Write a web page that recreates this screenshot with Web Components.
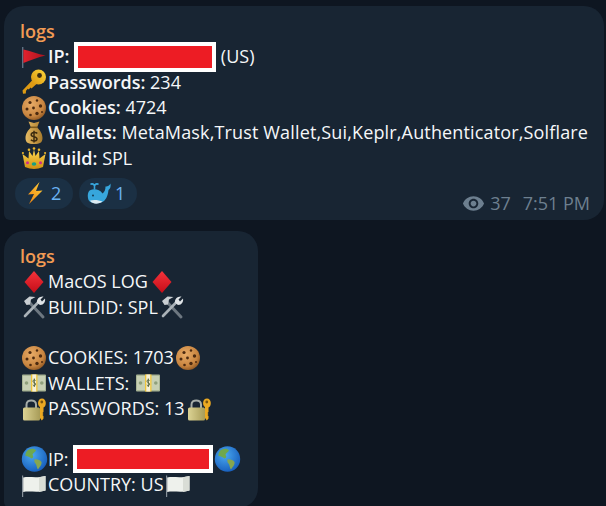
<!DOCTYPE html>
<html lang="en">
<head>
<meta charset="utf-8">
<title>logs</title>
<style>
html, body { height: 100%; overflow: hidden; }
body {
	margin: 0;
	background: #0e1621;
	color: #f5f7f9;
	font: 18px/25.33px "Open Sans", "Liberation Sans", sans-serif;
}
</style>
</head>
<body>

<chat-list>
	<tg-message>
		<msg-line title-line>logs</msg-line>
		<msg-line><x-emoji name="flag"></x-emoji><b>IP: </b><redact-box width="142" height="30"></redact-box> (US)</msg-line>
		<msg-line><x-emoji name="key"></x-emoji><b>Passwords:</b> 234</msg-line>
		<msg-line><x-emoji name="cookie"></x-emoji><b>Cookies:</b> 4724</msg-line>
		<msg-line><x-emoji name="bag"></x-emoji><b>Wallets:</b><span> MetaMask,Trust Wallet,Sui,Keplr,Authenticator,Solflare</span></msg-line>
		<msg-line><x-emoji name="crown"></x-emoji><b>Build:</b> SPL</msg-line>
		<msg-footer>
			<react-chip slot="chips" count="2"><x-emoji name="bolt"></x-emoji></react-chip>
			<react-chip slot="chips" count="1"><x-emoji name="whale"></x-emoji></react-chip>
			<msg-meta views="37" time="7:51 PM"></msg-meta>
		</msg-footer>
	</tg-message>

	<tg-message style="min-width: 222px">
		<msg-line title-line>logs</msg-line>
		<msg-line><x-emoji name="diamond"></x-emoji>MacOS LOG<x-emoji name="diamond"></x-emoji></msg-line>
		<msg-line><x-emoji name="tools"></x-emoji>BUILDID: SPL<x-emoji name="tools"></x-emoji></msg-line>
		<msg-line></msg-line>
		<msg-line><x-emoji name="cookie"></x-emoji>COOKIES: 1703<x-emoji name="cookie"></x-emoji></msg-line>
		<msg-line><x-emoji name="money"></x-emoji>WALLETS: <x-emoji name="money"></x-emoji></msg-line>
		<msg-line><x-emoji name="lock"></x-emoji>PASSWORDS: 13<x-emoji name="lock"></x-emoji></msg-line>
		<msg-line></msg-line>
		<msg-line><x-emoji name="globe"></x-emoji>IP: <redact-box width="140" height="28"></redact-box><x-emoji name="globe"></x-emoji></msg-line>
		<msg-line><x-emoji name="whiteflag"></x-emoji>COUNTRY: US<x-emoji name="whiteflag"></x-emoji></msg-line>
	</tg-message>
</chat-list>

<script>
// emoji are hand drawn, 24 box
const emoji = {
	flag: `<defs><linearGradient id="f" x1="0" x2="1"><stop offset="0" stop-color="#e3222e"/><stop offset="1" stop-color="#a8141e"/></linearGradient></defs>
		<rect x="0" y="2" width="1.400" height="21" fill="#5f7183"/>
		<path d="M1.400 4.500C8 6 16 9 23.500 10.500 16 12 8 15.500 1.400 18z" fill="url(#f)"/>`,
	key: `<defs><linearGradient id="k" x1="0" y1="1" x2="1" y2="0"><stop offset="0" stop-color="#d9950f"/><stop offset="1" stop-color="#ffd83b"/></linearGradient></defs>
		<path d="M.5 20.500 10.500 10 14.500 14 9.500 18.500 8.500 17.500 6.800 19.500 5.800 18.800 4 20.800 3.800 23.500 1 23.800z" fill="#dc9a14"/>
		<circle cx="16.500" cy="7" r="7.500" fill="url(#k)"/>
		<circle cx="17.500" cy="5.500" r="2.400" fill="#3b2c12"/>`,
	cookie: `<defs><radialGradient id="c" cx=".4" cy=".35" r=".7"><stop offset="0" stop-color="#e8ab66"/><stop offset=".7" stop-color="#c88540"/><stop offset="1" stop-color="#8d5520"/></radialGradient></defs>
		<circle cx="12" cy="12" r="12" fill="url(#c)"/>
		<g fill="#4c2a10"><circle cx="8" cy="6.500" r="1.600"/><circle cx="15" cy="4.500" r="1.200"/><circle cx="18.500" cy="10" r="1.700"/><circle cx="11.500" cy="12" r="1.400"/><circle cx="5" cy="13" r="1.500"/><circle cx="15" cy="17.500" r="1.700"/><circle cx="8.500" cy="19" r="1.300"/><circle cx="20" cy="16" r="1"/></g>`,
	bag: `<defs><linearGradient id="b" x1="0" x2="1"><stop offset="0" stop-color="#e6bb63"/><stop offset="1" stop-color="#a87b2c"/></linearGradient></defs>
		<path d="M6.500 .5 12 2 17.500 .5 15 6.500C18 9 20.500 13 20.500 17 20.500 21.500 18 23 12 23 6 23 3.500 21.500 3.500 17 3.500 13 6 9 9 6.500z" fill="url(#b)"/>
		<rect x="8.500" y="5.500" width="7" height="1.600" fill="#7c5a1c"/>
		<path d="M15.200 12.500C14.300 11 9.200 11 9.200 13.800 9.200 16.500 15 15 15 18 15 20.500 10.200 20.500 8.900 18.800M12 9.800V21.500" fill="none" stroke="#3d2c10" stroke-width="1.500"/>`,
	crown: `<defs><linearGradient id="r" x1="0" y1="0" x2="0" y2="1"><stop offset="0" stop-color="#ffd84f"/><stop offset="1" stop-color="#cf9012"/></linearGradient></defs>
		<path d="M3 21 .5 8 6.500 12.500 7 5 10.500 10 12 3.500 13.500 10 17 5 17.500 12.500 23.500 8 21 21C15 23.500 9 23.500 3 21z" fill="url(#r)"/>
		<circle cx="7" cy="3.800" r="1.300" fill="#e9b62c"/><circle cx="17" cy="3.800" r="1.300" fill="#e9b62c"/><circle cx="12" cy="2.500" r="1.300" fill="#e9b62c"/><circle cx=".9" cy="7" r="1.100" fill="#e9b62c"/><circle cx="23.100" cy="7" r="1.100" fill="#e9b62c"/>
		<ellipse cx="12" cy="18" rx="2.300" ry="1.800" fill="#16a082"/><circle cx="5.500" cy="16.800" r="1.500" fill="#cc2b8f"/><circle cx="18.500" cy="16.800" r="1.500" fill="#cc2b8f"/>`,
	bolt: `<defs><linearGradient id="l" x1="1" y1="0" x2="0" y2="1"><stop offset="0" stop-color="#ffd23c"/><stop offset="1" stop-color="#f0820f"/></linearGradient></defs>
		<path d="M16.500 1 5 13.500 11 13 6 23 19.500 9.500 13 10z" fill="url(#l)"/>`,
	whale: `<path d="M1.500 11C3 7.500 12 7 15.500 12.500 17.500 11 18.500 9 18.500 5.500 20 6 22.500 4.500 23.500 2.500 24 6 23 8 21.500 9 21 12.500 20.500 16 17.500 19.500 14 23 4 23.500 1.500 19 .5 16 .5 13 1.500 11z" fill="#37a6dc"/>
		<path d="M3 19.500C7 18.500 12 19 15.500 20.500 12 23.500 5 23.500 3 19.500z" fill="#dbeaf2"/>
		<path d="M7.500 8.500V4.500M7.500 4.500C6 2.500 4.500 2.500 3.500 3.500M7.500 4.500C9 2.500 10.500 2.500 11.500 3.500" fill="none" stroke="#37a6dc" stroke-width="1.600"/>
		<circle cx="6" cy="14.500" r="1" fill="#123a52"/>`,
	diamond: `<defs><linearGradient id="d" x1="0" y1="0" x2="0" y2="1"><stop offset="0" stop-color="#f5333b"/><stop offset="1" stop-color="#c40d18"/></linearGradient></defs>
		<path d="M12 1 21.500 12 12 23 2.500 12z" fill="url(#d)"/>`,
	tools: `<g fill="none" stroke-linecap="round">
			<path d="M7 7 21 22" stroke="#6d7780" stroke-width="3"/>
			<path d="M17.500 6 3 21" stroke="#aab2b8" stroke-width="2.600"/>
			<path d="M2 6 7.500 1.500 13.500 2 9 4.500 8 9.500 4.500 10z" fill="#c9ced2"/>
			<path d="M15 7.500C14.500 4 17.500 1 21.500 1.500L18.500 4.500 20 6.500 23 3.500C23.800 7.500 21 10.500 17.500 9.800z" fill="#dfe3e6"/>
		</g>`,
	money: `<rect x="0" y="3.500" width="24" height="17" rx="1" fill="#a9b596"/>
		<rect x="1" y="5" width="22" height="14" fill="#c7d0b4"/>
		<rect x="9" y="3.500" width="6.500" height="17" fill="#f0c53a"/>
		<rect x="10.300" y="3.500" width="3.900" height="17" fill="#f6f1d8"/>
		<path d="M13.600 9.500C13 8.500 11 8.500 11 10.300 11 12 13.600 11.300 13.600 13.200 13.600 15 11.300 15 10.800 14M12.300 7.500V16" fill="none" stroke="#4d5f3a" stroke-width=".9"/>
		<circle cx="4.500" cy="12" r="1.800" fill="#8fa07c"/><circle cx="19.800" cy="12" r="1.800" fill="#8fa07c"/>`,
	lock: `<defs><linearGradient id="o" x1="0" x2="1"><stop offset="0" stop-color="#dcd394"/><stop offset="1" stop-color="#a89c58"/></linearGradient></defs>
		<path d="M4.500 11V7.500C4.500 2 14 2 14 7.500V11" fill="none" stroke="#a5aca8" stroke-width="2"/>
		<rect x="1" y="10.500" width="17" height="13" rx="1.500" fill="url(#o)"/>
		<path d="M18 6.500V21L19.800 23.500 21.500 21.500V19L20.500 18 21.500 17 20.500 16 21.500 15V10.500C25 9 24.500 1.500 20 1.500 15.500 1.500 15 8.500 18 10z" fill="#eba922"/>
		<circle cx="19.800" cy="5" r="1.400" fill="#7a5510"/>`,
	globe: `<defs><radialGradient id="g" cx=".4" cy=".35" r=".75"><stop offset="0" stop-color="#4aa8f0"/><stop offset="1" stop-color="#1257b8"/></radialGradient></defs>
		<circle cx="12.500" cy="12" r="12.700" fill="url(#g)"/>
		<path d="M6 3C9 1 13 1.500 14 3.500 13 5.500 10.500 6 10.500 8 12 9.500 11 11 9.500 11.500 8.500 10.500 6 9 3.500 9 3 6.500 4.500 4 6 3z" fill="#6fa84e"/>
		<path d="M12.500 12.500C15 12 18 13 19.500 15 20 18 17 20.500 16 22.500 14.500 21 15 18.500 13.500 16.500 12.500 15.500 12 14 12.500 12.500z" fill="#86a650"/>`,
	whiteflag: `<rect x="0" y="2.500" width="1.200" height="21.500" fill="#87919a"/>
		<path d="M1.200 4.500C8 3 13 5.500 23.500 3V17.500C15 20 8 17.500 1.200 19z" fill="#eef1ec"/>
		<path d="M17 4.300 23.500 3V17.500L17 19z" fill="#d9ddd6"/>`
};

class XEmoji extends HTMLElement {
	connectedCallback () {
		// gradient ids only have to be unique inside one shadow root
		const name = this.getAttribute('name');
		this.attachShadow({ mode: 'open' }).innerHTML = `<style>
			:host { display: block; flex: none; width: 28px; height: 24px; }
			svg { display: block; width: 24px; height: 24px; margin: 0 2px; overflow: visible; }
		</style><svg viewBox="0 0 24 24" role="img" aria-label="${name}">${emoji[name]}</svg>`;
	}
}

class ChatList extends HTMLElement {
	connectedCallback () {
		this.attachShadow({ mode: 'open' }).innerHTML = `<style>
			:host { display: flex; flex-direction: column; align-items: flex-start; gap: 11px; padding: 6px 0 0 4px; }
		</style><slot></slot>`;
	}
}

class TgMessage extends HTMLElement {
	connectedCallback () {
		this.attachShadow({ mode: 'open' }).innerHTML = `<style>
			:host {
				display: block;
				flex: none;
				background: #182533;
				border-radius: 20px 20px 20px 6px;
				padding: 13px 16px 11px;
			}
		</style><slot></slot>`;
	}
}

class MsgLine extends HTMLElement {
	connectedCallback () {
		this.attachShadow({ mode: 'open' }).innerHTML = `<style>
			:host { display: flex; align-items: center; height: 25.33px; white-space: pre; }
			:host([title-line]) { color: #f29b54; font-weight: 600; }
			::slotted(b) { font-weight: 600; }
			::slotted(span) { letter-spacing: .15px; }
		</style><slot></slot>`;
	}
}

class RedactBox extends HTMLElement {
	connectedCallback () {
		const w = this.getAttribute('width');
		const h = this.getAttribute('height');
		this.attachShadow({ mode: 'open' }).innerHTML = `<style>
			:host {
				display: block;
				flex: none;
				box-sizing: border-box;
				width: ${w}px;
				height: ${h}px;
				background: #ed1c24;
				border: 4px solid #fff;
			}
		</style>`;
	}
}

class MsgFooter extends HTMLElement {
	connectedCallback () {
		this.attachShadow({ mode: 'open' }).innerHTML = `<style>
			:host { display: flex; justify-content: space-between; align-items: flex-end; margin: 7px 0 0 -5px; }
			.chips { display: flex; gap: 6px; }
		</style><div class="chips"><slot name="chips"></slot></div><slot></slot>`;
	}
}

class ReactChip extends HTMLElement {
	connectedCallback () {
		this.attachShadow({ mode: 'open' }).innerHTML = `<style>
			:host {
				display: flex;
				align-items: center;
				height: 31px;
				width: 58px;
				box-sizing: border-box;
				padding-left: 6px;
				background: #1b3044;
				border-radius: 16px;
				color: #6ab2f2;
			}
			span { margin-left: 2px; }
		</style><slot></slot><span>${this.getAttribute('count')}</span>`;
	}
}

class MsgMeta extends HTMLElement {
	connectedCallback () {
		this.attachShadow({ mode: 'open' }).innerHTML = `<style>
			:host { display: flex; align-items: center; color: #6d7f8f; white-space: pre; margin: 0 -2px -7px 0; }
			svg { width: 23px; height: 23px; margin-right: 5px; fill: currentColor; }
			.time { margin-left: 12px; }
		</style><svg viewBox="0 0 24 24"><path d="M12 4.500C7 4.500 2.730 7.610 1 12c1.730 4.390 6 7.500 11 7.500s9.270-3.110 11-7.500c-1.730-4.390-6-7.500-11-7.500zM12 17c-2.760 0-5-2.240-5-5s2.240-5 5-5 5 2.240 5 5-2.240 5-5 5zm0-8c-1.660 0-3 1.340-3 3s1.340 3 3 3 3-1.340 3-3-1.340-3-3-3z"/></svg><span>${this.getAttribute('views')}</span><span class="time">${this.getAttribute('time')}</span>`;
	}
}

customElements.define('x-emoji', XEmoji);
customElements.define('chat-list', ChatList);
customElements.define('tg-message', TgMessage);
customElements.define('msg-line', MsgLine);
customElements.define('redact-box', RedactBox);
customElements.define('msg-footer', MsgFooter);
customElements.define('react-chip', ReactChip);
customElements.define('msg-meta', MsgMeta);
</script>
</body>
</html>
